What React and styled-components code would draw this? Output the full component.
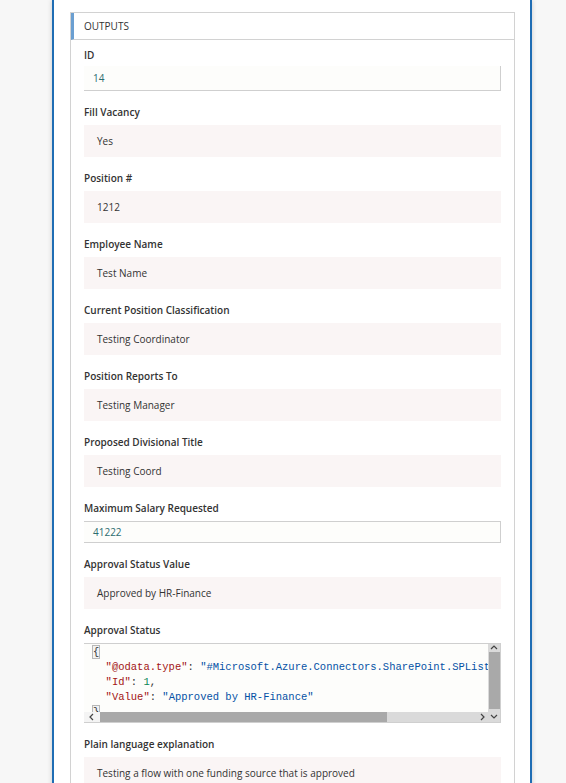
import React from 'react';
import styled, { createGlobalStyle } from 'styled-components';

const GlobalStyle = createGlobalStyle`
  html, body {
    margin: 0;
    padding: 0;
    background: #f7f7f7;
    font-family: "Open Sans", "Noto Sans", sans-serif;
    color: #333;
  }
`;

const Page = styled.div`
  height: 783px;
  overflow: hidden;
  padding-left: 52px;
`;

const Panel = styled.div`
  width: 480px;
  min-height: 783px;
  box-sizing: border-box;
  background: #fff;
  border-left: 2px solid #1f6db4;
  border-right: 2px solid #1f6db4;
  box-shadow: 0 0 5px rgba(0, 0, 0, 0.18);
  padding: 12px 15px 0 16px;
`;

const Card = styled.div`
  border: 1px solid #d2d2d2;
  border-bottom: none;
`;

const CardHeader = styled.div`
  height: 26px;
  display: flex;
  align-items: center;
  border-bottom: 1px solid #d2d2d2;
  border-left: 3px solid #6b9fd1;
  padding-left: 10px;
  font-size: 10px;
`;

const CardBody = styled.div`
  padding: 8px 13px 0 13px;
  display: flex;
  flex-direction: column;
  gap: 14px;
`;

const Field = styled.div`
  display: flex;
  flex-direction: column;
`;

const Label = styled.div`
  font-size: 10px;
  font-weight: 600;
  line-height: 14px;
  margin-bottom: ${p => (p.$tight ? '4px' : '6px')};
  color: #333;
`;

const Value = styled.div`
  height: 32px;
  display: flex;
  align-items: center;
  padding-left: 13px;
  background: #faf5f5;
  font-size: 10px;
  color: #333;
`;

const Input = styled.div`
  height: ${p => p.$h}px;
  box-sizing: border-box;
  display: flex;
  align-items: center;
  padding-left: 9px;
  background: #fdfdfb;
  border-bottom: 1px solid #cfcfcf;
  border-right: 1px solid #cfcfcf;
  border-top: ${p => (p.$boxed ? '1px solid #cfcfcf' : 'none')};
  font-size: 10px;
  color: #2d6c70;
`;

const CodeBox = styled.div`
  height: 80px;
  box-sizing: border-box;
  border: 1px solid #cfcfcf;
  border-left: none;
  background: #fdfdfb;
  display: grid;
  grid-template-columns: 1fr 12px;
  grid-template-rows: 1fr 10px;
`;

const Code = styled.pre`
  margin: 0;
  padding: 1px 0 0 9px;
  overflow: hidden;
  font-family: "Liberation Mono", "DejaVu Sans Mono", monospace;
  font-size: 10.5px;
  line-height: 15px;
  color: #333;
  white-space: pre;
`;

const Brace = styled.span`
  outline: 1px solid #b8b8b8;
  background: #f2f2f2;
`;

const Key = styled.span`color: #a31515;`;
const Str = styled.span`color: #0451a5;`;
const Num = styled.span`color: #098658;`;

const VScroll = styled.div`
  background: #dadada;
  display: flex;
  flex-direction: column;
  align-items: center;
`;

const Arrow = styled.div`
  height: ${p => p.$h || 9}px;
  width: ${p => (p.$w ? `${p.$w}px` : '100%')};
  display: flex;
  align-items: center;
  justify-content: center;
  background: ${p => p.$bg || 'transparent'};
`;

const VThumb = styled.div`
  flex: 1;
  width: 11px;
  background: #a9a9a9;
  margin-bottom: 3px;
`;

const HScroll = styled.div`
  background: #dadada;
  display: flex;
  align-items: stretch;
`;

const HThumb = styled.div`
  width: 287px;
  background: #a9a9a9;
`;

const Spacer = styled.div`
  flex: 1;
`;

const Corner = styled.div`
  background: #dadada;
  display: flex;
  align-items: center;
  justify-content: center;
`;

const Chevron = ({ dir }) => {
  const d = {
    up: 'M1 5 L4 2 L7 5',
    down: 'M1 2 L4 5 L7 2',
    left: 'M5 1 L2 4 L5 7',
    right: 'M2 1 L5 4 L2 7',
  }[dir];
  return (
    <svg width="8" height="8" viewBox="0 0 8 8">
      <path d={d} fill="none" stroke="#444" strokeWidth="1.2" />
    </svg>
  );
};

const fields = [
  ['Fill Vacancy', 'Yes'],
  ['Position #', '1212'],
  ['Employee Name', 'Test Name'],
  ['Current Position Classification', 'Testing Coordinator'],
  ['Position Reports To', 'Testing Manager'],
  ['Proposed Divisional Title', 'Testing Coord'],
];

export default function App() {
  return (
    <>
      <GlobalStyle />
      <Page>
        <Panel>
          <Card>
            <CardHeader>OUTPUTS</CardHeader>
            <CardBody>
              <Field>
                <Label $tight>ID</Label>
                <Input $h={25}>14</Input>
              </Field>
              {fields.map(([label, value]) => (
                <Field key={label}>
                  <Label>{label}</Label>
                  <Value>{value}</Value>
                </Field>
              ))}
              <Field>
                <Label>Maximum Salary Requested</Label>
                <Input $h={22} $boxed>41222</Input>
              </Field>
              <Field>
                <Label>Approval Status Value</Label>
                <Value>Approved by HR-Finance</Value>
              </Field>
              <Field>
                <Label>Approval Status</Label>
                <CodeBox>
                  <Code>
                    <Brace>{'{'}</Brace>
                    {'\n  '}<Key>"@odata.type"</Key>: <Str>"#Microsoft.Azure.Connectors.SharePoint.SPListExpandedReference"</Str>,
                    {'\n  '}<Key>"Id"</Key>: <Num>1</Num>,
                    {'\n  '}<Key>"Value"</Key>: <Str>"Approved by HR-Finance"</Str>
                    {'\n'}<Brace>{'}'}</Brace>
                  </Code>
                  <VScroll>
                    <Arrow $h={8}><Chevron dir="up" /></Arrow>
                    <VThumb />
                  </VScroll>
                  <HScroll>
                    <Arrow $h={10} $w={16} $bg="#f4f4f4"><Chevron dir="left" /></Arrow>
                    <HThumb />
                    <Spacer />
                    <Arrow $h={10} $w={10}><Chevron dir="right" /></Arrow>
                  </HScroll>
                  <Corner><Chevron dir="down" /></Corner>
                </CodeBox>
              </Field>
              <Field>
                <Label>Plain language explanation</Label>
                <Value>Testing a flow with one funding source that is approved</Value>
              </Field>
            </CardBody>
          </Card>
        </Panel>
      </Page>
    </>
  );
}
